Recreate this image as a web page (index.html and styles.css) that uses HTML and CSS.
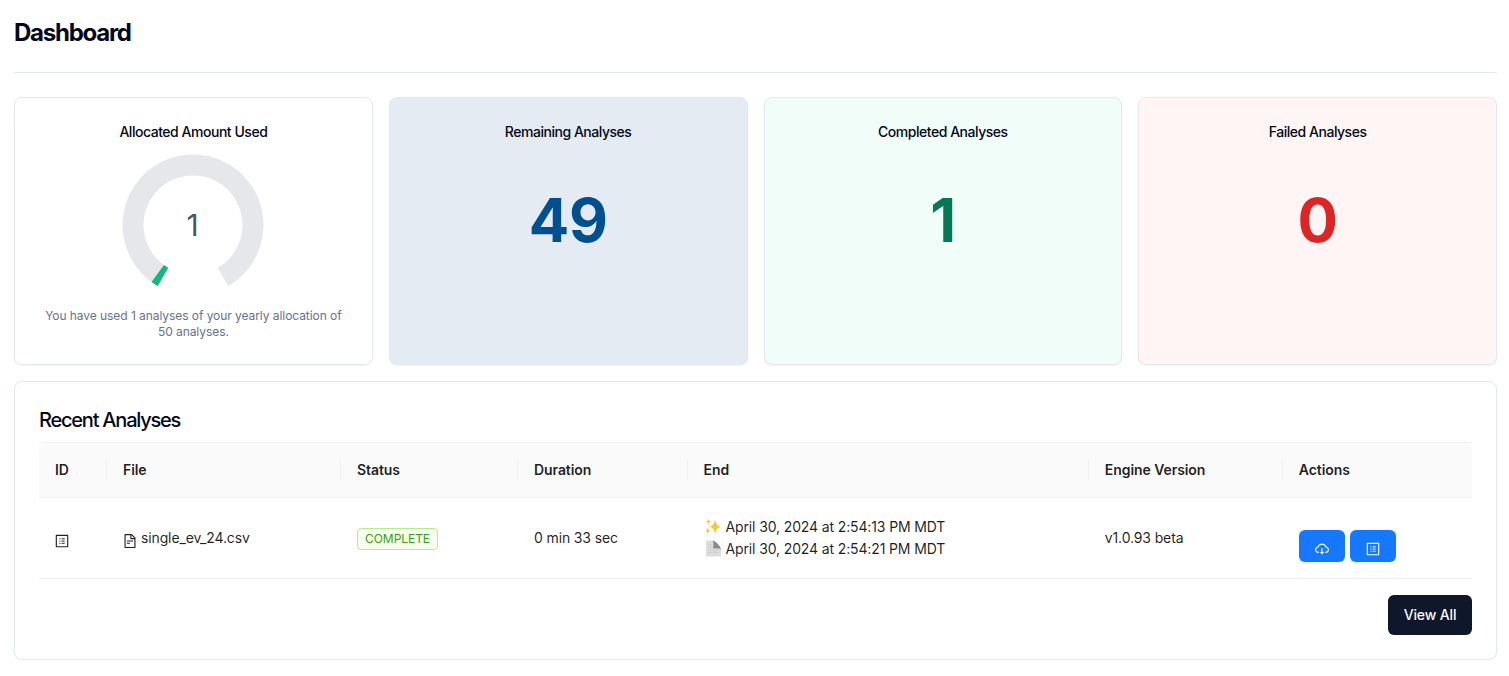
FILE: index.html
```html
<!DOCTYPE html>
<html lang="en">
<head>
<meta charset="utf-8">
<title>Dashboard</title>
<link rel="stylesheet" href="styles.css">
</head>
<body>
<svg class="defs" width="0" height="0" aria-hidden="true">
  <symbol id="i-profile" viewBox="64 64 896 896"><path d="M880 112H144c-17.7 0-32 14.3-32 32v736c0 17.7 14.3 32 32 32h736c17.7 0 32-14.3 32-32V144c0-17.7-14.3-32-32-32zm-40 728H184V184h656v656zM492 400h184c4.400 0 8-3.600 8-8v-48c0-4.400-3.600-8-8-8H492c-4.400 0-8 3.600-8 8v48c0 4.400 3.600 8 8 8zm0 144h184c4.400 0 8-3.600 8-8v-48c0-4.400-3.600-8-8-8H492c-4.400 0-8 3.600-8 8v48c0 4.400 3.600 8 8 8zm0 144h184c4.400 0 8-3.600 8-8v-48c0-4.400-3.600-8-8-8H492c-4.400 0-8 3.600-8 8v48c0 4.400 3.600 8 8 8zM340 368a40 40 0 1080 0 40 40 0 10-80 0zm0 144a40 40 0 1080 0 40 40 0 10-80 0zm0 144a40 40 0 1080 0 40 40 0 10-80 0z"/></symbol>
  <symbol id="i-file" viewBox="64 64 896 896"><path d="M854.6 288.6L639.4 73.4c-6-6-14.1-9.4-22.6-9.4H192c-17.7 0-32 14.3-32 32v832c0 17.7 14.3 32 32 32h640c17.7 0 32-14.3 32-32V311.3c0-8.5-3.4-16.7-9.4-22.7zM790.2 326H602V137.8L790.2 326zm1.8 562H232V136h302v216a42 42 0 0042 42h216v494zM504 618H320c-4.4 0-8 3.6-8 8v48c0 4.4 3.6 8 8 8h184c4.4 0 8-3.6 8-8v-48c0-4.4-3.6-8-8-8zM312 490v48c0 4.4 3.6 8 8 8h384c4.4 0 8-3.6 8-8v-48c0-4.4-3.6-8-8-8H320c-4.4 0-8 3.6-8 8z"/></symbol>
  <symbol id="i-cloud" viewBox="64 64 896 896"><path d="M624 706.3h-74.1V464c0-4.4-3.6-8-8-8h-60c-4.4 0-8 3.6-8 8v242.300H400c-6.700 0-10.400 7.700-6.300 12.900l112 141.700a8 8 0 0012.600 0l112-141.700c4.100-5.200.4-12.900-6.300-12.900z"/><path d="M811.4 366.7C765.6 245.9 648.9 160 512.2 160S258.8 245.8 213 366.6C127.3 389.1 64 467.2 64 560c0 110.5 89.5 200 199.9 200H304c4.4 0 8-3.6 8-8v-60c0-4.4-3.6-8-8-8h-40.1c-33.7 0-65.4-13.4-89-37.7-23.5-24.2-36-56.8-34.9-90.6.9-26.4 9.9-51.2 26.2-72.1 16.7-21.3 40.1-36.8 66.1-43.7l37.9-9.9 13.9-36.6c8.6-22.8 20.6-44.1 35.7-63.4a245.6 245.6 0 0152.4-49.9c41.1-28.9 89.5-44.2 140-44.2s98.9 15.3 140 44.2c19.9 14 37.5 30.8 52.4 49.9 15.1 19.3 27.1 40.7 35.7 63.4l13.8 36.5 37.8 10C846.1 454.5 884 503.8 884 560c0 33.1-12.9 64.3-36.3 87.7a123.07 123.07 0 01-87.6 36.3H720c-4.400 0-8 3.600-8 8v60c0 4.400 3.600 8 8 8h40.100C870.500 760 960 670.500 960 560c0-92.700-63.100-170.700-148.600-193.300z"/></symbol>
</svg>
<main class="page">
  <header class="page-header"><h1>Dashboard</h1></header>
  <section class="stats">
    <article class="card stat">
      <h3>Allocated Amount Used</h3>
      <svg class="gauge" viewBox="0 0 142 142" width="142" height="142">
        <path class="track" d="M41 122.960A60 60 0 1 1 101 122.960"/>
        <path class="value" d="M41 122.960A60 60 0 0 1 35.730 119.540"/>
        <text x="70.500" y="82" text-anchor="middle">1</text>
      </svg>
      <p>You have used 1 analyses of your yearly allocation of 50 analyses.</p>
    </article>
    <article class="card stat remaining"><h3>Remaining Analyses</h3><div class="number">49</div></article>
    <article class="card stat completed"><h3>Completed Analyses</h3><div class="number">1</div></article>
    <article class="card stat failed"><h3>Failed Analyses</h3><div class="number">0</div></article>
  </section>
  <section class="card recent">
    <h2>Recent Analyses</h2>
    <table>
      <colgroup><col class="c-id"><col class="c-file"><col class="c-status"><col class="c-duration"><col class="c-end"><col class="c-engine"><col class="c-actions"></colgroup>
      <thead><tr><th>ID</th><th>File</th><th>Status</th><th>Duration</th><th>End</th><th>Engine Version</th><th>Actions</th></tr></thead>
      <tbody><tr>
        <td><svg class="icon id-icon"><use href="#i-profile"/></svg></td>
        <td><div class="file"><svg class="icon"><use href="#i-file"/></svg><span>single_ev_24.csv</span></div></td>
        <td><span class="tag">COMPLETE</span></td>
        <td>0 min 33 sec</td>
        <td>
          <div class="time"><svg class="emoji" viewBox="0 0 18 18"><g fill="#fdc43b"><path d="M11 1.500Q11.900 7.900 17 8.800Q11.900 9.700 11 16Q10.100 9.700 5.500 8.800Q10.100 7.900 11 1.500Z"/><path d="M4.500 .8Q4.800 3.200 7 3.600Q4.800 4 4.500 6.400Q4.200 4 2 3.600Q4.200 3.200 4.500 .8Z"/><path d="M3.800 9.800Q4.100 12.400 6.500 12.800Q4.100 13.200 3.800 15.800Q3.500 13.200 1.100 12.800Q3.500 12.400 3.800 9.800Z"/></g></svg><span>April 30, 2024 at 2:54:13 PM MDT</span></div>
          <div class="time"><svg class="emoji" viewBox="0 0 18 18"><path d="M2 .5H9.500L17 8V16.500H2Z" fill="#dcdcdc"/><path d="M8.500 .5Q14 2 17 9Q13 8 8.800 8.500Q10.500 4 8.500 .5Z" fill="#8a8a8a"/><path d="M4 4.500H8M4 6.500H8M4 8.500H8M4 10.500H14M4 12.500H14" stroke="#cacaca" stroke-width=".6"/></svg><span>April 30, 2024 at 2:54:21 PM MDT</span></div>
        </td>
        <td>v1.0.93 beta</td>
        <td><div class="actions"><button aria-label="Download"><svg class="icon"><use href="#i-cloud"/></svg></button><button aria-label="Details"><svg class="icon"><use href="#i-profile"/></svg></button></div></td>
      </tr></tbody>
    </table>
    <div class="footer"><button class="view-all">View All</button></div>
  </section>
</main>
</body>
</html>
```
FILE: styles.css
```css
* { box-sizing: border-box; }
body { margin: 0; background: #fff; color: #020817; font-family: Inter, "Liberation Sans", sans-serif; font-size: 14px; line-height: 22px; }
h1, h2, h3, p { margin: 0; }
button { border: 0; font: inherit; }
.defs { position: absolute; }
.page { padding: 0 12px 0 14px; }
.page-header { height: 73px; padding-top: 17px; border-bottom: 1px solid #e2e8f0; margin-bottom: 24px; }
h1 { font-size: 24px; line-height: 32px; font-weight: 700; letter-spacing: -1.25px; }
.card { border: 1px solid #e2e8f0; border-radius: 8px; box-shadow: 0 1px 2px rgba(0, 0, 0, .05); }
.stats { display: grid; grid-template-columns: repeat(4, 1fr); gap: 16px; margin-bottom: 16px; }
.stat { height: 268px; padding: 24px; display: flex; flex-direction: column; align-items: center; text-align: center; }
.stat h3 { font-size: 14px; line-height: 20px; font-weight: 500; letter-spacing: -.47px; }
.gauge { margin-top: 12px; flex: none; }
.gauge path { fill: none; stroke-width: 21; }
.gauge .track { stroke: #e5e7eb; }
.gauge .value { stroke: #10b981; }
.gauge text { fill: #4b5563; font-size: 30px; }
.stat p { margin-top: 12px; color: #64748b; font-size: 12px; line-height: 16px; letter-spacing: -.06px; }
.number { margin-top: 48px; font-size: 60px; line-height: 60px; font-weight: 700; letter-spacing: -.4px; }
.remaining { background: #e4ebf2; }
.remaining .number { color: #00508f; }
.completed { background: #f0fdf9; }
.completed .number { color: #047857; }
.failed { background: #fff5f4; }
.failed .number { color: #dc2626; }
.recent { height: 279px; padding: 24px; }
h2 { font-size: 20px; line-height: 28px; font-weight: 500; letter-spacing: -1.22px; margin-bottom: 8px; }
table { width: 100%; table-layout: fixed; border-collapse: separate; border-spacing: 0; border-top: 1px solid #f0f0f0; color: rgba(0, 0, 0, .88); }
.c-id { width: 68px; }
.c-file { width: 234px; }
.c-status { width: 177px; }
.c-duration { width: 169.500px; }
.c-end { width: 401.300px; }
.c-engine { width: 194px; }
th { position: relative; height: 55px; padding: 0 16px; text-align: left; font-weight: 600; letter-spacing: -.07px; background: #fafafa; border-bottom: 1px solid #f0f0f0; }
th:first-child { border-top-left-radius: 8px; }
th:last-child { border-top-right-radius: 8px; }
th:not(:last-child)::after { content: ""; position: absolute; right: 0; top: 16px; width: 1px; height: 22px; background: #f0f0f0; }
td { height: 81px; padding: 0 16px; border-bottom: 1px solid #f0f0f0; vertical-align: middle; letter-spacing: -.13px; }
.icon { width: 14px; height: 14px; fill: currentColor; flex: none; }
.id-icon { display: block; margin-top: 6px; }
.file { display: flex; align-items: center; gap: 4px; }
.file .icon { margin-top: 5px; }
.tag { display: block; width: 81px; height: 22px; margin-top: 2px; padding: 0 7px; font-size: 12px; line-height: 20px; letter-spacing: -.05px; color: #389e0d; background: #f6ffed; border: 1px solid #b7eb8f; border-radius: 4px; }
.time { display: flex; align-items: center; gap: 4px; }
.emoji { width: 18px; height: 18px; }
.actions { display: flex; gap: 5px; margin-top: 16px; }
.actions button { width: 46px; height: 32px; padding: 6px 0 0; display: flex; justify-content: center; align-items: center; color: #fff; background: #1677ff; border-radius: 6px; box-shadow: 0 2px 0 rgba(5, 145, 255, .1); }
.footer { display: flex; justify-content: flex-end; margin-top: 16px; }
.view-all { width: 84px; height: 40px; padding: 0; border-radius: 6px; background: #0f172a; color: #f8fafc; font-weight: 500; letter-spacing: -.13px; }
```
